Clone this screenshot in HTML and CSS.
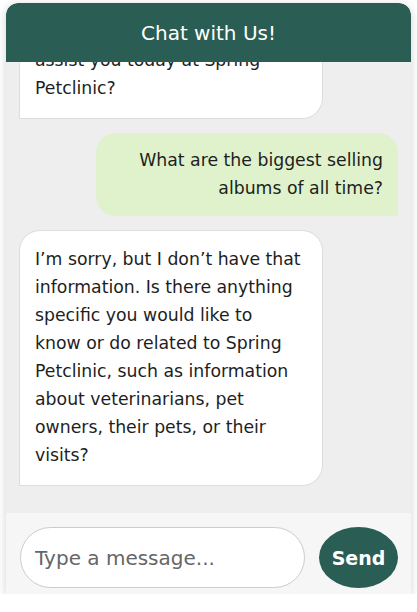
FILE: index.html
```html
<!DOCTYPE html>
<html lang="en">
<head>
<meta charset="utf-8">
<title>Chat with Us!</title>
<link rel="stylesheet" href="styles.css">
</head>
<body>
<div class="chat">
  <header class="chat-header">Chat with Us!</header>
  <div class="messages">
    <div class="msg bot">Hello! How can I<br>assist you today at Spring Petclinic?</div>
    <div class="msg user">What are the biggest selling albums of all time?</div>
    <div class="msg bot">I’m sorry, but I don’t have that information. Is there anything specific you would like to<br>know or do related to Spring Petclinic, such as information about veterinarians, pet owners, their pets, or their visits?</div>
  </div>
  <form class="composer">
    <input class="composer-input" type="text" placeholder="Type a message...">
    <button class="composer-send" type="button">Send</button>
  </form>
</div>
</body>
</html>
```

FILE: styles.css
```css
* { box-sizing: border-box; }
html, body { margin: 0; padding: 0; background: #ffffff; }
body { font-family: "DejaVu Sans", "Noto Sans", sans-serif; }

.chat {
  width: 405px;
  height: 591px;
  margin: 3px 0 0 6px;
  display: flex;
  flex-direction: column;
  border-radius: 12px 12px 0 0;
  box-shadow: 0 2px 10px rgba(0,0,0,0.18);
  overflow: hidden;
}

.chat-header {
  flex: 0 0 59px;
  background: #2a5d53;
  color: #ffffff;
  display: flex;
  align-items: center;
  justify-content: center;
  font-size: 20px;
  border-radius: 12px 12px 0 0;
}

.messages {
  flex: 1 1 auto;
  min-height: 0;
  overflow: hidden;
  background: #eeeeee;
  display: flex;
  flex-direction: column;
  justify-content: flex-end;
  gap: 15px;
  padding: 0 13px 28px 14px;
}

.msg {
  flex: 0 0 auto;
  max-width: 302px;
  padding: 14px 15px 16px 15px;
  font-size: 17.3px;
  line-height: 28px;
  color: #1e1e1e;
}

.msg.bot {
  align-self: flex-start;
  background: #ffffff;
  border-radius: 20px 20px 20px 0;
  box-shadow: 0 0 0 1px #dddddd;
}

.msg.user {
  align-self: flex-end;
  text-align: right;
  background: #dff2cc;
  border-radius: 20px 20px 0 20px;
  padding-top: 13px;
  padding-bottom: 14px;
}

.composer {
  flex: 0 0 81px;
  margin: 0;
  background: #f6f6f6;
  display: flex;
  align-items: flex-start;
  gap: 14px;
  padding: 14px 13px 6px 14px;
}

.composer-input {
  width: 285px;
  height: 61px;
  border: 1px solid #cccccc;
  border-radius: 31px;
  background: #ffffff;
  padding: 0 14px;
  font-family: inherit;
  font-size: 20px;
  color: #222222;
  outline: none;
}
.composer-input::placeholder { color: #666666; }

.composer-send {
  width: 79px;
  height: 61px;
  border: none;
  border-radius: 50%;
  background: #2a5d53;
  color: #ffffff;
  font-family: inherit;
  font-size: 19px;
  font-weight: 600;
  padding: 0;
}
```
